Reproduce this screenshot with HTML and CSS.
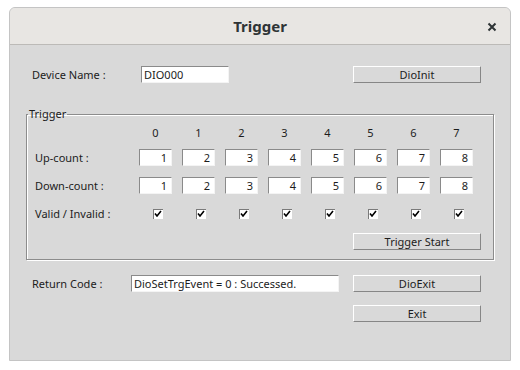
FILE: index.html
```html
<!DOCTYPE html>
<html lang="en">
  <head>
    <meta charset="UTF-8" />
    <title>Trigger</title>
    <link rel="stylesheet" href="styles.css">
  </head>

  <body>
    <div class="window">
      <div class="titlebar">
        <span class="title">Trigger</span>
        <svg class="close" width="10" height="10" viewBox="0 0 10 10">
          <path d="M1.5 1.5 L8.5 8.5 M8.5 1.5 L1.5 8.5" stroke="#2e3436" stroke-width="2" />
        </svg>
      </div>

      <div class="content">
        <div class="row device-row">
          <span class="label device-label">Device Name :</span>
          <div class="field device-field">DIO000</div>
          <button class="btn">DioInit</button>
        </div>

        <fieldset class="group">
          <legend>Trigger</legend>
          <div class="grid">
            <span></span>
            <span class="head">0</span><span class="head">1</span><span class="head">2</span><span class="head">3</span>
            <span class="head">4</span><span class="head">5</span><span class="head">6</span><span class="head">7</span>

            <span class="label">Up-count :</span>
            <div class="field num">1</div><div class="field num">2</div><div class="field num">3</div><div class="field num">4</div>
            <div class="field num">5</div><div class="field num">6</div><div class="field num">7</div><div class="field num">8</div>

            <span class="label">Down-count :</span>
            <div class="field num">1</div><div class="field num">2</div><div class="field num">3</div><div class="field num">4</div>
            <div class="field num">5</div><div class="field num">6</div><div class="field num">7</div><div class="field num">8</div>

            <span class="label">Valid / Invalid :</span>
            <span class="check"><svg width="8" height="8" viewBox="0 0 8 8"><path d="M1 3.5 L3 6 L7 1" stroke="#000" stroke-width="1.6" fill="none" /></svg></span>
            <span class="check"><svg width="8" height="8" viewBox="0 0 8 8"><path d="M1 3.5 L3 6 L7 1" stroke="#000" stroke-width="1.6" fill="none" /></svg></span>
            <span class="check"><svg width="8" height="8" viewBox="0 0 8 8"><path d="M1 3.5 L3 6 L7 1" stroke="#000" stroke-width="1.6" fill="none" /></svg></span>
            <span class="check"><svg width="8" height="8" viewBox="0 0 8 8"><path d="M1 3.5 L3 6 L7 1" stroke="#000" stroke-width="1.6" fill="none" /></svg></span>
            <span class="check"><svg width="8" height="8" viewBox="0 0 8 8"><path d="M1 3.5 L3 6 L7 1" stroke="#000" stroke-width="1.6" fill="none" /></svg></span>
            <span class="check"><svg width="8" height="8" viewBox="0 0 8 8"><path d="M1 3.5 L3 6 L7 1" stroke="#000" stroke-width="1.6" fill="none" /></svg></span>
            <span class="check"><svg width="8" height="8" viewBox="0 0 8 8"><path d="M1 3.5 L3 6 L7 1" stroke="#000" stroke-width="1.6" fill="none" /></svg></span>
            <span class="check"><svg width="8" height="8" viewBox="0 0 8 8"><path d="M1 3.5 L3 6 L7 1" stroke="#000" stroke-width="1.6" fill="none" /></svg></span>
          </div>
          <div class="group-actions">
            <button class="btn">Trigger Start</button>
          </div>
        </fieldset>

        <div class="row return-row">
          <span class="label return-label">Return Code :</span>
          <div class="field return-field">DioSetTrgEvent = 0 : Successed.</div>
          <button class="btn">DioExit</button>
        </div>

        <div class="row exit-row">
          <button class="btn">Exit</button>
        </div>
      </div>
    </div>
  </body>
</html>
```

FILE: styles.css
```css
body {
  margin: 0;
  background-color: #fff;
  font-family: 'Noto Sans', sans-serif;
  font-size: 11px;
  color: #1c1c1c;
}

.window {
  margin: 7px 0 0 9px;
  width: 500px;
  height: 352px;
  background-color: #d9d9d9;
  border: 1px solid #c4c4c4;
  border-radius: 6px 6px 0 0;
  overflow: hidden;
}

.titlebar {
  height: 36px;
  display: flex;
  align-items: center;
  justify-content: center;
  position: relative;
  background-color: #e8e6e3;
  border-bottom: 1px solid #bcbab7;
}

.title {
  font-size: 15px;
  font-weight: bold;
  color: #2e3436;
}

.close {
  position: absolute;
  right: 13px;
  top: 14px;
}

.content {
  padding: 21px 29px 0 22px;
}

.row {
  display: flex;
  align-items: center;
  height: 17px;
}

.label {
  white-space: nowrap;
}

.device-label {
  width: 109px;
}

.field {
  box-sizing: border-box;
  height: 17px;
  background-color: #fff;
  border-top: 1px solid #8a8a8a;
  border-left: 1px solid #8a8a8a;
  border-right: 1px solid #f4f4f4;
  border-bottom: 1px solid #f4f4f4;
  line-height: 15px;
  padding: 0 2px;
  white-space: nowrap;
}

.device-field {
  width: 88px;
  margin-right: auto;
}

.btn {
  box-sizing: border-box;
  width: 128px;
  height: 17px;
  padding: 0;
  font-family: inherit;
  font-size: 11px;
  color: #1c1c1c;
  background-color: #d9d9d9;
  border-top: 1px solid #fff;
  border-left: 1px solid #fff;
  border-right: 1px solid #868686;
  border-bottom: 1px solid #868686;
}

.group {
  margin: 24px -13px 0 -6px;
  padding: 5px 12px 9px 8px;
  border: 1px solid #8c8c8c;
  box-shadow: 1px 1px 0 #fff, inset 1px 1px 0 #fff;
}

.group legend {
  padding: 0 1px;
  margin-left: -7px;
  line-height: 14px;
}

.grid {
  display: grid;
  grid-template-columns: 94px repeat(8, 33px);
  grid-template-rows: 12px 17px 17px 17px;
  column-gap: 10px;
  row-gap: 11px;
  align-items: center;
}

.head {
  text-align: center;
}

.num {
  text-align: right;
  padding-right: 4px;
}

.check {
  justify-self: center;
  box-sizing: border-box;
  width: 10px;
  height: 10px;
  margin-left: 4px;
  display: flex;
  align-items: center;
  justify-content: center;
  background-color: #fff;
  border-top: 1px solid #7a7a7a;
  border-left: 1px solid #7a7a7a;
}

.group-actions {
  display: flex;
  justify-content: flex-end;
  margin-top: 11px;
}

.return-row {
  margin-top: 15px;
}

.return-label {
  width: 99px;
}

.return-field {
  width: 208px;
  margin-right: auto;
}

.exit-row {
  margin-top: 13px;
  justify-content: flex-end;
}
```
